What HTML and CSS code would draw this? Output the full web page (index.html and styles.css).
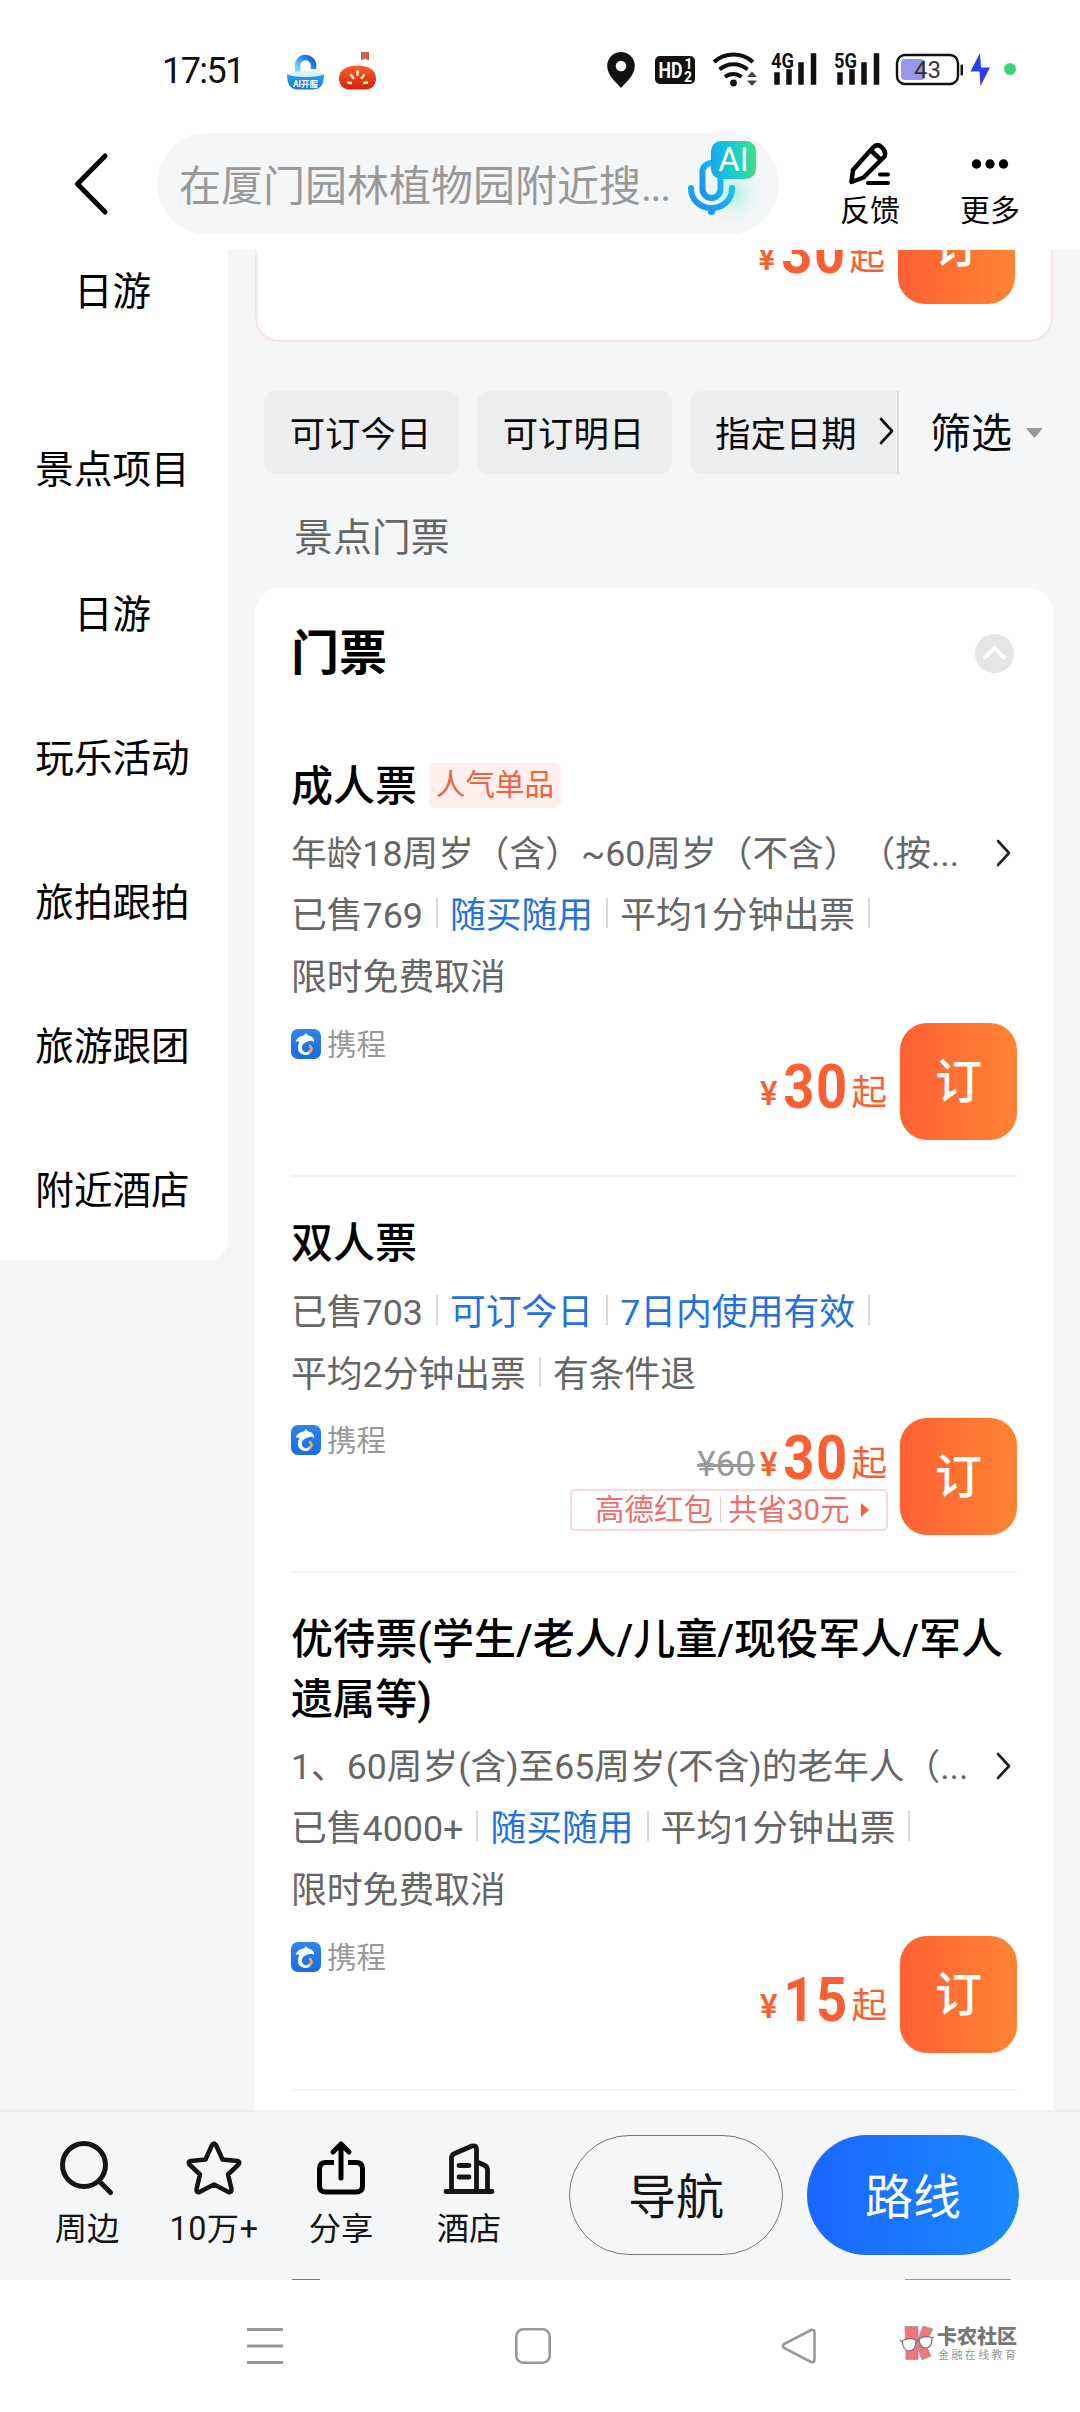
FILE: index.html
```html
<!DOCTYPE html>
<html lang="zh-CN">
<head>
<meta charset="utf-8">
<title>景点门票</title>
<link rel="stylesheet" href="styles.css">
</head>
<body>
<svg class="defs" width="0" height="0">
  <defs>
    <linearGradient id="ctrip-bg" x1="0" y1="0" x2="0" y2="1"><stop offset="0" stop-color="#2f86e8"/><stop offset="1" stop-color="#1a6be8"/></linearGradient>
    <linearGradient id="mic-fill" x1="0" y1="1" x2="1" y2="0"><stop offset="0" stop-color="#1b8cf5"/><stop offset="1" stop-color="#13c8f0"/></linearGradient>
    <symbol id="ctrip" viewBox="0 0 30 30">
      <rect width="30" height="30" rx="7" fill="url(#ctrip-bg)"/>
      <path d="M4.500 13C5.500 9.500 9 6.500 13 6.500L15 4l2 2.500c4 .5 6.500 3 6 6.500-1.500-1.500-4-1.500-6-.5-4 1-6.500 3.500-6 7 .3 3 2.500 5 5.500 5-4.500 2.500-9 0-9.500-5-.2-2.500.5-4.500 1.500-6.500-1.500-.8-2.500-.6-4-.5z" fill="#fff"/>
      <path d="M12 23.500c2 1.800 5 1.500 6.500-.8" fill="none" stroke="#fff" stroke-width="2.600" stroke-linecap="round"/>
      <path d="M19 17q3 3 0 6" fill="none" stroke="#e9a76a" stroke-width="2.600" stroke-linecap="round"/>
    </symbol>
    <symbol id="chev" viewBox="0 0 18 30"><path d="M3 3l11 12L3 27" fill="none" stroke="currentColor" stroke-width="2.600" stroke-linecap="round" stroke-linejoin="round"/></symbol>
  </defs>
</svg>
<div class="screen">
  <header class="top">
    <div class="status">
      <span class="clock">17:51</span>
      <svg class="app" width="37" height="38" viewBox="0 0 37 38"><defs><linearGradient id="ring" x1="0" y1="1" x2="1" y2="0"><stop offset="0" stop-color="#9fe6f8"/><stop offset=".6" stop-color="#2c8ef3"/><stop offset="1" stop-color="#1c4fe0"/></linearGradient><linearGradient id="bowl" x1="0" y1="0" x2="0" y2="1"><stop offset="0" stop-color="#25a8ec"/><stop offset="1" stop-color="#1173e8"/></linearGradient></defs>
        <path d="M10.500 21v-7a8 8 0 0 1 16-1v4" fill="none" stroke="url(#ring)" stroke-width="5.500"/>
        <path d="M1 23c3-5 31-5 35 0-6 3-29 3-35 0z" fill="#d9f1fc"/>
        <path d="M0 22c5 4 32 4 37 0 0 10-3 15.500-11 15.500H11C3 37.500 0 32 0 22z" fill="url(#bowl)"/>
        <text x="18.500" y="35" text-anchor="middle" class="app-text">AI开服</text></svg>
      <svg class="app2" width="37" height="38" viewBox="0 0 37 38"><defs><linearGradient id="tomato" x1="0" y1="0" x2="0" y2="1"><stop offset="0" stop-color="#f4622b"/><stop offset="1" stop-color="#d71f0c"/></linearGradient></defs>
        <path d="M22 0h8v8.500L26 6.500l-4 2z" fill="#d2603f"/><path d="M18.500 13.500C30 13.500 37 18.500 37 26.500c0 7-5 11-10 11H10c-5 0-10-4-10-11 0-8 7-13 18.500-13z" fill="url(#tomato)"/>
        <path d="M18.500 19.500v3.500M12 23l2.300 3M25 23l-2.300 3M9 30.500l3 .5M28 30.500l-3 .5" stroke="#fff6c8" stroke-width="2.400" stroke-linecap="round"/></svg>
      <svg class="sys" width="414" height="38" viewBox="0 0 414 38">
        <path d="M14 0a13.800 13.800 0 0 1 13.800 13.800C27.800 24 18 31 14 36 10 31 .2 24 .2 13.800A13.800 13.800 0 0 1 14 0z" fill="#111"/><circle cx="14" cy="14" r="5.300" fill="#fff"/>
        <rect x="48" y="4" width="40" height="28" rx="5" fill="#111"/>
        <text x="51.500" y="26" class="hd" textLength="24" lengthAdjust="spacingAndGlyphs">HD</text><text x="77.500" y="16.500" class="hd-s">1</text><text x="77" y="30" class="hd-s">2</text>
        <g fill="none" stroke="#111" stroke-width="4"><path d="M107 10a29 29 0 0 1 39 0"/><path d="M112.500 17.500a21 21 0 0 1 28 0"/><path d="M118 25a13 13 0 0 1 16.500 0"/></g><circle cx="126.500" cy="31" r="3.400" fill="#111"/>
        <path d="M140 25l5-5.500 5 5.500zM140 28.500l5 5.500 5-5.500z" fill="#444"/>
        <text x="164" y="16" class="net" textLength="23" lengthAdjust="spacingAndGlyphs">4G</text><text x="227" y="16" class="net" textLength="23" lengthAdjust="spacingAndGlyphs">5G</text>
        <path d="M170 24v7M182 21v10M194 14v17M206.500 5v26M233 24v7M245 21v10M257 14v17M269.500 5v26" stroke="#111" stroke-width="5.500" stroke-linecap="square" transform="translate(0 -1)"/>
        <rect x="290" y="3" width="61" height="29" rx="8" fill="none" stroke="#111" stroke-width="2.400"/><rect x="294" y="7" width="24" height="21" rx="4" fill="#9698ee"/><rect x="353.500" y="12.500" width="2.500" height="11" rx="1" fill="#111"/>
        <text x="320.500" y="26" text-anchor="middle" class="batt">43</text>
        <path d="M373 1l-9.500 18.500h9L373.500 34l9.500-18.500h-9z" fill="#2b3ff0"/><circle cx="403" cy="17" r="6" fill="#37d67a"/>
      </svg>
    </div>
    <div class="nav">
      <svg class="back" width="37" height="64" viewBox="0 0 37 64"><path d="M32 4L4.500 32 32 60" fill="none" stroke="#000" stroke-width="5" stroke-linecap="round" stroke-linejoin="round"/></svg>
      <div class="search"><span class="ph">在厦门园林植物园附近搜<span class="dots">...</span></span>
        <svg class="mic" width="86" height="90" viewBox="0 0 86 90"><defs><linearGradient id="ai" x1="0" y1="0" x2="1" y2="0"><stop offset="0" stop-color="#16a6f4"/><stop offset=".5" stop-color="#18cfc8"/><stop offset="1" stop-color="#3fdc8b"/></linearGradient><radialGradient id="glow"><stop offset="0" stop-color="#a9f0de"/><stop offset="1" stop-color="#f5f6f8" stop-opacity="0"/></radialGradient></defs>
          <circle cx="48" cy="55" r="34" fill="url(#glow)"/>
          <g fill="none" stroke="url(#mic-fill)" stroke-width="6" stroke-linecap="round"><rect x="17.500" y="24" width="18" height="35" rx="9"/><path d="M6 49v1a20.500 19 0 0 0 41 0v-1"/></g><circle cx="26.500" cy="72.500" r="3.500" fill="#1b95f5"/>
          <rect x="26" y="2" width="45" height="38" rx="10" fill="url(#ai)"/><text x="48.500" y="32" text-anchor="middle" class="ai">AI</text></svg>
      </div>
      <div class="act act-fb"><svg width="44" height="44" viewBox="0 0 44 44" fill="none" stroke="#000" stroke-width="4.500" stroke-linejoin="round" stroke-linecap="round"><path d="M3.500 40l1.500-12L25 5.500q4.500-4.500 9 0t2.500 9L15.500 35.500zM24 9.500l8.500 8"/><path d="M32 32.500h8M20 41h20" stroke-width="4"/></svg><span>反馈</span></div>
      <div class="act act-more"><svg width="44" height="44" viewBox="0 0 44 44"><circle cx="8.500" cy="22" r="4.700"/><circle cx="22" cy="22" r="4.700"/><circle cx="35.500" cy="22" r="4.700"/></svg><span>更多</span></div>
    </div>
  </header>

  <main class="main">
    <nav class="side">
      <a class="first">日游</a><a>景点项目</a><a>日游</a><a>玩乐活动</a><a>旅拍跟拍</a><a>旅游跟团</a><a>附近酒店</a>
    </nav>
    <div class="content">
      <section class="prev">
        <div class="price"><span class="yen">¥</span><span class="num">30</span><span class="qi">起</span></div><button class="book">订</button>
      </section>
      <div class="filters">
        <div class="chips"><span class="chip">可订今日</span><span class="chip">可订明日</span><span class="chip cut">指定日期<svg width="18" height="30"><use href="#chev"/></svg></span></div>
        <span class="filter">筛选</span><svg class="tri" width="17" height="10" viewBox="0 0 17 10"><path d="M1 0h15q1 0 0 1L9.500 9q-1 1-2 0L.5 1Q0 0 1 0z" fill="#999"/></svg>
      </div>
      <h2 class="group">景点门票</h2>
      <section class="card">
        <div class="card-head"><h3>门票</h3><svg width="39" height="39" viewBox="0 0 39 39"><circle cx="19.500" cy="19.500" r="19.500" fill="#e5e5e5"/><path d="M10 23.500l9.500-9.500 9.500 9.500" fill="none" stroke="#fff" stroke-width="4" stroke-linecap="round" stroke-linejoin="round"/></svg></div>

        <article class="ticket t1">
          <h4>成人票<span class="badge">人气单品</span></h4>
          <div class="desc"><span>年龄18周岁（含）~60周岁（不含）（按...</span><svg width="18" height="30"><use href="#chev"/></svg></div>
          <div class="tags"><span>已售769</span><span class="blue">随买随用</span><span>平均1分钟出票</span></div>
          <div class="tags"><span class="last">限时免费取消</span></div>
          <div class="foot">
            <div class="src"><svg width="30" height="30"><use href="#ctrip"/></svg>携程</div>
            <div class="buy"><div class="price"><span class="yen">¥</span><span class="num">30</span><span class="qi">起</span></div></div>
            <button class="book">订</button>
          </div>
        </article>

        <article class="ticket t2">
          <h4>双人票</h4>
          <div class="tags"><span>已售703</span><span class="blue">可订今日</span><span class="blue">7日内使用有效</span></div>
          <div class="tags"><span>平均2分钟出票</span><span class="last">有条件退</span></div>
          <div class="foot">
            <div class="src"><svg width="30" height="30"><use href="#ctrip"/></svg>携程</div>
            <div class="buy"><div class="price"><s>¥60</s><span class="yen">¥</span><span class="num">30</span><span class="qi">起</span></div>
              <div class="coupon"><span>高德红包</span><i></i><span>共省30元</span><b></b></div></div>
            <button class="book">订</button>
          </div>
        </article>

        <article class="ticket t3">
          <h4>优待票(学生/老人/儿童/现役军人/军人<br>遗属等)</h4>
          <div class="desc"><span>1、60周岁(含)至65周岁(不含)的老年人（...</span><svg width="18" height="30"><use href="#chev"/></svg></div>
          <div class="tags"><span>已售4000+</span><span class="blue">随买随用</span><span>平均1分钟出票</span></div>
          <div class="tags"><span class="last">限时免费取消</span></div>
          <div class="foot">
            <div class="src"><svg width="30" height="30"><use href="#ctrip"/></svg>携程</div>
            <div class="buy"><div class="price"><span class="yen">¥</span><span class="num">15</span><span class="qi">起</span></div></div>
            <button class="book">订</button>
          </div>
        </article>
      </section>
    </div>
  </main>

  <footer class="bar">
    <div class="tab tab1"><svg width="56" height="56" viewBox="0 0 56 56" fill="none" stroke="#151515" stroke-width="5" stroke-linecap="round"><circle cx="25" cy="25" r="21.500"/><path d="M41 42l10.500 10.500"/></svg>周边</div>
    <div class="tab tab2"><svg width="56" height="56" viewBox="0 0 56 56" fill="none" stroke="#151515" stroke-width="4.500" stroke-linejoin="round"><path d="M26 5q2-3 4 0l6.500 14.500 15 1.500q3 .5 1 3.500L42 34.500l3.500 14.500q.5 4-3 3L28 44.500 13.500 52q-3.500 1-3-3L14 34.500 3.500 24.500q-2-3 1-3.500l15-1.500z"/></svg>10万+</div>
    <div class="tab tab3"><svg width="56" height="56" viewBox="0 0 56 56" fill="none" stroke="#000" stroke-width="5" stroke-linecap="round" stroke-linejoin="round"><path d="M21 22.500h-8q-6.500 0-6.500 6.500v17q0 6 6.500 6h30q6.500 0 6.500-6V29q0-6.500-6.500-6.500h-8" stroke-linecap="butt"/><path d="M28 38V6M20 12l8-8 8 8"/></svg>分享</div>
    <div class="tab tab4"><svg width="56" height="56" viewBox="0 0 56 56" fill="none" stroke="#151515" stroke-width="4.800" stroke-linecap="round" stroke-linejoin="round"><path d="M5 51.500h46M10.500 51V18q0-3 3-4.500L31 6q4.500-1 4.500 3v42M36 22l7 3q3.500 1.500 3.500 5v21M18 25.500h10M18 37h10"/></svg>酒店</div>
    <button class="pill go">导航</button>
    <button class="pill route">路线</button>
    <div class="peek"><i class="peek-src"></i><i class="peek-btn"></i></div>
  </footer>

  <div class="sysnav">
    <svg class="menu" width="36" height="36" viewBox="0 0 36 36"><path d="M0 1.500h36M0 18h36M0 34.500h36" stroke="#999" stroke-width="2.800"/></svg>
    <svg class="home" width="36" height="36" viewBox="0 0 36 36"><rect x="1.300" y="1.300" width="33.400" height="33.400" rx="7" fill="none" stroke="#999" stroke-width="2.600"/></svg>
    <svg class="ret" width="36" height="36" viewBox="0 0 36 36"><path d="M30 2L3 16q-2 2 0 4l27 14q3.500 1 3.500-2.500v-27Q33.500 1 30 2z" fill="none" stroke="#999" stroke-width="2.600"/></svg>
    <div class="mark"><svg width="34" height="36" viewBox="0 0 34 36"><g fill="#f4747c" stroke="#999" stroke-width=".8"><path d="M5 1.500h13v33H6zM18 14L23 1l10 3-8 14 6 13-9 4-5-14z"/></g><g fill="#fff" stroke="#777" stroke-width="1.200"><path d="M2 16q7-4 14-1 0 11-7 11-6-1-7-10zM19 14q7-4 13-1 0 10-6 10-6 0-7-9z"/><path d="M16 16l3-1M0 15l2 2M32 13l2-1"/></g></svg>
      <div><strong>卡农社区</strong><em>金融在线教育</em></div></div>
  </div>
</div>
</body>
</html>
```
FILE: styles.css
```css
* { box-sizing: border-box; margin: 0; padding: 0; }
body { width: 1080px; height: 2412px; overflow: hidden; background: #fff; color: #0a0a0a; font-family: Roboto, "Noto Sans CJK SC", sans-serif; text-spacing-trim: space-all; }
button { border: 0; font: inherit; }
svg { display: block; flex: none; }
i, em { font-style: normal; }
.defs { position: absolute; }
.screen { width: 1080px; height: 2412px; display: flex; flex-direction: column; }

/* status bar and search */
.top { height: 250px; flex: none; background: #fff; }
.status { height: 133px; display: flex; align-items: flex-start; padding: 52px 0 0 162px; }
.clock { width: 125px; font-size: 36px; line-height: 38px; letter-spacing: -1.6px; color: #111; }
.app2 { margin-left: 15px; }
.sys { margin-left: 231px; overflow: visible; }
.app-text { font: 700 8.5px Roboto, "Noto Sans CJK SC", sans-serif; fill: #fff; }
.hd { font: 700 22px Roboto, sans-serif; fill: #fff; }
.hd-s { font: 700 14px Roboto, sans-serif; fill: #fff; }
.net { font: 700 21px Roboto, sans-serif; fill: #111; }
.batt { font: 400 24px Roboto, sans-serif; fill: #333; }
.nav { height: 101px; display: flex; padding-left: 73px; }
.back { margin-top: 19px; }
.search { width: 622px; height: 101px; margin-left: 47px; padding-left: 22px; border-radius: 51px; background: #f5f6f8; display: flex; }
.ph { width: 506px; font-size: 42px; line-height: 107px; color: #999; white-space: nowrap; }
.dots { letter-spacing: -1.5px; }
.mic { margin-top: 6px; }
.ai { font: 400 33px Roboto, sans-serif; fill: #fff; }
.act { display: flex; flex-direction: column; align-items: center; width: 60px; font-size: 30px; line-height: 36px; color: #000; }
.act svg { margin: 9px 0 7px; }
.act-fb { margin-left: 61px; }
.act-more { margin-left: 60px; }

/* body */
.main { height: 1860px; flex: none; display: flex; align-items: flex-start; background: #f5f6f8; overflow: hidden; }
.side { width: 228px; height: 1010px; background: #fff; border-radius: 0 0 20px 0; display: flex; flex-direction: column; }
.side a { height: 144px; line-height: 149px; text-align: center; font-size: 38.600px; color: #000; padding-right: 3px; }
.side .first { height: 178px; line-height: 84px; }
.side .first + a { height: 115px; line-height: 88px; }
.content { width: 798px; margin-left: 27px; }
.prev { height: 92px; display: flex; justify-content: flex-end; align-items: flex-end; padding: 0 36px 36px 0; background: #fff; border: 2px solid #fbe3e3; border-top: 0; border-radius: 0 0 24px 24px; }
.prev .price { margin: 0 13px 22px 0; }
.filters { height: 83px; margin-top: 49px; padding-left: 9px; display: flex; align-items: center; }
.chips { width: 635px; display: flex; gap: 18px; border-right: 2px solid #dddee0; overflow: hidden; }
.chip { flex: none; width: 195px; height: 83px; line-height: 89px; padding-right: 2px; border-radius: 12px; background: #edeef0; text-align: center; font-size: 35.400px; }
.chip.cut { width: 260px; display: flex; align-items: flex-start; padding-left: 25px; }
.chip.cut svg { margin: 25px 0 0 21px; }
.filter { padding-top: 4px; margin-left: 31px; font-size: 41px; line-height: 83px; }
.tri { margin-left: 14px; }
.group { margin: 34px 0 0 39px; height: 80px; font-size: 38.900px; line-height: 60px; font-weight: 400; color: #666; }
.card { height: 1600px; padding: 0 36px; background: #fff; border-radius: 24px 24px 0 0; }
.card-head { height: 131px; display: flex; justify-content: space-between; align-items: center; padding-right: 3px; }
.card-head h3 { font-size: 48px; line-height: 60px; font-weight: 700; color: #000; }
.ticket { border-bottom: 2px solid #f4f4f5; }
.t1 { height: 458px; padding-top: 38px; }
.t2 { height: 396px; padding-top: 37px; }
.t3 { height: 518px; padding-top: 37px; }
.ticket h4 { font-size: 42px; line-height: 60px; font-weight: 500; color: #000; display: flex; align-items: center; white-space: nowrap; }
.t3 h4 { display: block; letter-spacing: .1px; }
.badge { margin: -3px 0 0 12px; padding: 0 7px; height: 45px; border-radius: 6px; background: #ffefed; color: #f2603c; font-size: 29.500px; line-height: 45px; font-weight: 400; }
.desc { height: 62px; margin-top: 6px; display: flex; justify-content: space-between; align-items: center; padding-right: 4px; font-size: 35.700px; line-height: 62px; color: #666; white-space: nowrap; }
.desc svg { color: #222; margin-top: -3px; }
.t2 h4 { margin-bottom: 8px; }
.tags { height: 62px; display: flex; align-items: center; font-size: 35.800px; line-height: 62px; color: #666; white-space: nowrap; }
.tags span { display: flex; align-items: center; }
.tags span::after { content: ""; width: 2px; height: 30px; margin: -6px 12px 0 13px; background: #d9d9d9; }
.tags .last::after { display: none; }
.tags .blue { color: #2571dd; }
.foot { height: 117px; margin-top: 14px; display: flex; justify-content: space-between; }
.t2 .foot { margin-top: 12px; }
.src { display: flex; height: 44px; align-items: center; gap: 6px; font-size: 29.500px; line-height: 44px; color: #999; }
.t2 .src { height: 46px; line-height: 46px; }
.src svg { margin-top: -2px; }
.buy { flex: 1; display: flex; flex-direction: column; align-items: flex-end; padding-top: 34px; margin-right: 13px; }
.t2 .buy { padding-top: 10px; }
.price { display: flex; align-items: baseline; height: 60px; line-height: 60px; color: #f95f31; white-space: nowrap; }
.price > :not(.num) { transform: translateY(-3px); }
.yen { font-size: 33px; font-weight: 500; margin-right: 2px; }
.num { font-size: 61px; font-weight: 700; letter-spacing: 2px; transform: scaleX(.89); transform-origin: right; margin-left: -4px; }
.qi { font-size: 35.600px; margin-left: 2px; }
.price s { font-size: 35px; color: #999; margin-right: 5px; }
.book { width: 117px; height: 117px; flex: none; border-radius: 27px; background: linear-gradient(90deg, #ff6033, #ff8433); color: #fff; font-size: 47px; font-weight: 500; line-height: 118px; text-align: center; }
.coupon { width: 318px; height: 42px; margin: 1px -1px 0 0; padding-left: 23px; border: 2px solid #fbd8d8; border-radius: 5px; display: flex; align-items: center; font-size: 29.500px; line-height: 40px; color: #ee6e6c; }
.coupon i { width: 1px; height: 26px; margin: 0 7px; background: #f8c8c8; }
.coupon b { margin-left: 11px; border: 7px solid transparent; border-left: 8px solid #f2603c; border-right: 0; }

/* bottom actions */
.bar { position: relative; height: 170px; flex: none; background: #f5f6f8; border-top: 2px solid #eeeff1; display: flex; align-items: flex-start; padding-top: 23px; }
.tab { display: flex; flex-direction: column; align-items: center; width: 100px; font-size: 32.300px; line-height: 40px; color: #151515; padding-top: 5px; white-space: nowrap; }
.tab svg { margin-bottom: 13px; }
.tab1 { margin-left: 37px; }
.tab2 { margin-left: 27px; letter-spacing: .5px; }
.tab3 { margin-left: 27px; }
.tab4 { margin-left: 28px; }
.pill { height: 120px; border-radius: 60px; font-size: 48px; font-weight: 400; line-height: 125px; }
.go { width: 214px; margin-left: 50px; border: 1px solid #777; background: transparent; color: #151515; line-height: 123px; }
.route { width: 212px; margin-left: 24px; color: #fff; background: linear-gradient(90deg, #1a66ff, #1a8aff); }
.peek { position: absolute; left: 292px; right: 69px; bottom: 0; display: flex; justify-content: space-between; }
.peek i { height: 1px; }
.peek-src { width: 28px; background: #3c8fb0; }
.peek-btn { width: 106px; background: #d08862; }
.sysnav { flex: 1; display: flex; padding: 48px 0 0 247px; }
.home { margin-left: 232px; }
.ret { margin-left: 230px; }
.mark { display: flex; gap: 3px; margin: -3px 0 0 83px; }
.mark strong, .mark em { display: block; white-space: nowrap; color: #777; }
.mark strong { font-size: 20px; line-height: 25px; font-weight: 900; }
.mark em { font-size: 11px; line-height: 12px; letter-spacing: 2.400px; color: #999; margin-left: 1px; }
```
